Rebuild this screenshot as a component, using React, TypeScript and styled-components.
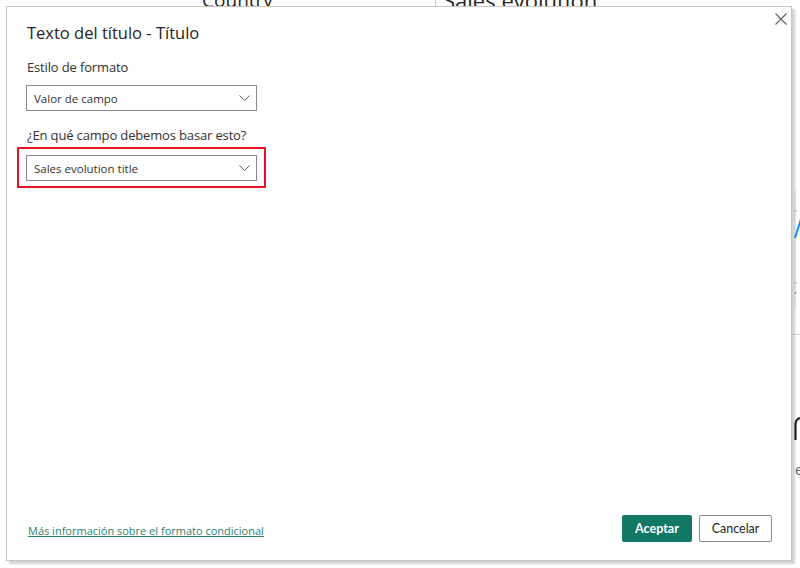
import styled, { createGlobalStyle } from "styled-components"

const GlobalStyle = createGlobalStyle`
    html, body {
        margin: 0;
        padding: 0;
        background: #ffffff;
        font-family: "Open Sans", "Noto Sans", sans-serif;
        color: #252423;
    }
`

const fields = [
    { label: "Estilo de formato", value: "Valor de campo", highlighted: false },
    { label: "¿En qué campo debemos basar esto?", value: "Sales evolution title", highlighted: true },
]

const Chevron = () => (
    <svg width="11" height="6" viewBox="0 0 11 6">
        <path d="M0.5 0.5 L5.5 5.5 L10.5 0.5" fill="none" stroke="#605e5c" strokeWidth="1" />
    </svg>
)

const CloseIcon = () => (
    <svg width="12" height="12" viewBox="0 0 12 12">
        <path d="M0.5 0.5 L11.5 11.5 M11.5 0.5 L0.5 11.5" fill="none" stroke="#605e5c" strokeWidth="1.1" />
    </svg>
)

const SelectBox = ({ value }: { value: string }) => (
    <Select>
        <SelectText>{value}</SelectText>
        <Chevron />
    </Select>
)

const App = () => {
    return (
        <>
            <GlobalStyle />
            <Page>
                <ReportCanvas>
                    <CountryVisual>
                        <VisualTitle>Country</VisualTitle>
                    </CountryVisual>
                    <SalesVisual>
                        <SalesTitle>Sales evolution</SalesTitle>
                        <ChartEdge>
                            <svg width="12" height="480" viewBox="0 0 12 480">
                                <line x1="2" y1="190" x2="2" y2="310" stroke="#e0e0e0" strokeWidth="1" />
                                <line x1="1" y1="211" x2="4" y2="211" stroke="#b0b0b0" />
                                <line x1="1" y1="283" x2="4" y2="283" stroke="#b0b0b0" />
                                <path d="M2 238 L9 216" stroke="#118dff" strokeWidth="2" fill="none" />
                                <path d="M2 294 L3 292" stroke="#118dff" strokeWidth="1" fill="none" />
                                <line x1="0" y1="334.5" x2="12" y2="334.5" stroke="#d6d6d6" strokeWidth="1" />
                                <path d="M2.5 440 L2.5 424 Q3 418 9 418" stroke="#252423" strokeWidth="2.2" fill="none" />
                            </svg>
                            <EdgeLabel>e</EdgeLabel>
                        </ChartEdge>
                    </SalesVisual>
                </ReportCanvas>

                <Dialog>
                    <CloseButton><CloseIcon /></CloseButton>
                    <DialogTitle>Texto del título - Título</DialogTitle>
                    <DialogBody>
                        {fields.map((f) => (
                            <Field key={f.label}>
                                <FieldLabel>{f.label}</FieldLabel>
                                {f.highlighted ?
                                    <Highlight><SelectBox value={f.value} /></Highlight> :
                                    <SelectBox value={f.value} />
                                }
                            </Field>
                        ))}
                    </DialogBody>
                    <DialogFooter>
                        <InfoLink href="#">Más información sobre el formato condicional</InfoLink>
                        <ButtonRow>
                            <PrimaryButton>Aceptar</PrimaryButton>
                            <SecondaryButton>Cancelar</SecondaryButton>
                        </ButtonRow>
                    </DialogFooter>
                </Dialog>
            </Page>
        </>
    )
}

export default App;

const Page = styled.div`
    position: relative;
    width: 800px;
    height: 568px;
    overflow: hidden;
    background: #ffffff;
`

const ReportCanvas = styled.div`
    display: flex;
    align-items: flex-start;
    height: 100%;
`

const CountryVisual = styled.div`
    width: 435px;
    height: 520px;
    border-right: 1px solid #c8c6c4;
    display: flex;
    justify-content: center;
    align-items: flex-start;
`

const VisualTitle = styled.div`
    font-size: 19px;
    color: #252423;
    margin-top: -13px;
    padding-left: 40px;
`

const SalesVisual = styled.div`
    flex: 1;
    align-self: stretch;
    position: relative;
    padding-left: 7px;
`

const SalesTitle = styled.div`
    font-size: 22px;
    color: #252423;
    margin-top: -15px;
`

const ChartEdge = styled.div`
    position: absolute;
    right: -5px;
    top: 0;
    width: 12px;
`

const EdgeLabel = styled.span`
    position: absolute;
    top: 460px;
    left: 2px;
    font-size: 14px;
    color: #605e5c;
`

const Dialog = styled.div`
    position: absolute;
    left: 6px;
    top: 6px;
    width: 786px;
    height: 555px;
    box-sizing: border-box;
    background: #ffffff;
    border: 1px solid #c8c6c4;
    box-shadow: 3px 3px 2px rgba(0, 0, 0, 0.18);
    display: flex;
    flex-direction: column;
    padding: 14px 19px 18px 19px;
`

const CloseButton = styled.div`
    position: absolute;
    top: 6px;
    right: 4px;
    width: 12px;
    height: 12px;
    display: flex;
`

const DialogTitle = styled.div`
    font-size: 16.5px;
    line-height: 24px;
    color: #252423;
    margin-left: 1px;
`

const DialogBody = styled.div`
    display: flex;
    flex-direction: column;
    gap: 14px;
    margin-top: 12px;
    flex: 1;
`

const Field = styled.div`
    display: flex;
    flex-direction: column;
    gap: 8px;
`

const FieldLabel = styled.div`
    font-size: 13px;
    line-height: 20px;
    letter-spacing: -0.15px;
    color: #323130;
    margin-left: 1px;
`

const Select = styled.div`
    width: 231px;
    height: 26px;
    box-sizing: border-box;
    border: 1px solid #8a8886;
    display: flex;
    align-items: center;
    justify-content: space-between;
    padding: 0 6px 0 7px;
    background: #ffffff;
`

const SelectText = styled.span`
    font-size: 11.5px;
    color: #323130;
`

const Highlight = styled.div`
    width: fit-content;
    margin-left: -9px;
    margin-top: -6px;
    padding: 6px 7px 5px 7px;
    border: 2px solid #e81123;
`

const DialogFooter = styled.div`
    display: flex;
    justify-content: space-between;
    align-items: center;
`

const InfoLink = styled.a`
    font-size: 11px;
    color: #2c7f70;
    text-decoration: underline;
    margin-left: 2px;
    margin-top: 4px;
`

const ButtonRow = styled.div`
    display: flex;
    gap: 7px;
`

const PrimaryButton = styled.button`
    width: 70px;
    height: 27px;
    border: none;
    border-radius: 2px;
    background: #117865;
    color: #ffffff;
    font-family: "Lato", sans-serif;
    font-weight: 700;
    font-size: 12.5px;
`

const SecondaryButton = styled.button`
    width: 73px;
    height: 27px;
    border: 1px solid #8a8886;
    border-radius: 2px;
    background: #ffffff;
    color: #252423;
    font-family: "Lato", sans-serif;
    font-size: 12.5px;
`
